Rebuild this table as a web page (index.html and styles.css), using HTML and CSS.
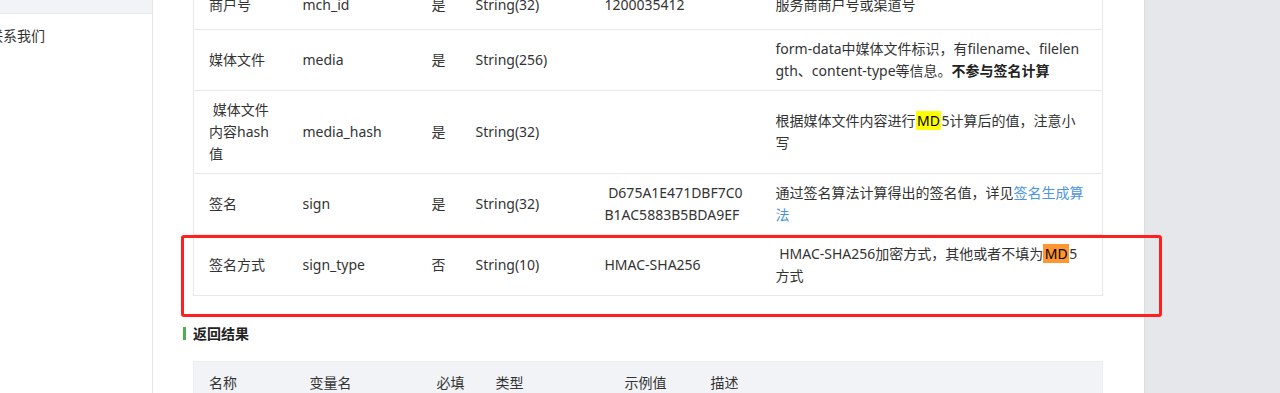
FILE: index.html
```html
<!DOCTYPE html>
<html lang="zh-CN">
<head>
<meta charset="utf-8">
<title>上传媒体文件 - 接口文档</title>
<link rel="stylesheet" href="styles.css">
</head>
<body>
<div class="app">
  <aside class="sidebar">
    <div class="sidebar-head"></div>
    <ul class="menu">
      <li class="menu-item">联系我们</li>
    </ul>
  </aside>

  <main class="main">
    <div class="doc">
      <table class="params">
        <colgroup>
          <col class="c-name"><col class="c-var"><col class="c-req"><col class="c-type"><col class="c-example"><col>
        </colgroup>
        <tbody>
          <tr class="row-lead">
            <td>商户号</td><td>mch_id</td><td>是</td><td>String(32)</td><td>1200035412</td><td>服务商商户号或渠道号</td>
          </tr>
          <tr>
            <td>媒体文件</td><td>media</td><td>是</td><td>String(256)</td><td></td>
            <td>form-data中媒体文件标识，有filename、filelength、content-type等信息。<strong>不参与签名计算</strong></td>
          </tr>
          <tr>
            <td>&nbsp;媒体文件内容hash值</td><td>media_hash</td><td>是</td><td>String(32)</td><td></td>
            <td>根据媒体文件内容进行<mark class="hl">MD</mark>5计算后的值，注意小写</td>
          </tr>
          <tr>
            <td>签名</td><td>sign</td><td>是</td><td>String(32)</td><td>&nbsp;D675A1E471DBF7C0B1AC5883B5BDA9EF</td>
            <td>通过签名算法计算得出的签名值，详见<a class="link" href="#sign">签名生成算法</a></td>
          </tr>
          <tr>
            <td>签名方式</td><td>sign_type</td><td>否</td><td>String(10)</td><td>HMAC-SHA256</td>
            <td>&nbsp;HMAC-SHA256加密方式，其他或者不填为<mark class="hl hl-active">MD</mark>5方式</td>
          </tr>
        </tbody>
      </table>

      <h3 class="section-title">返回结果</h3>

      <table class="results">
        <colgroup>
          <col class="r-name"><col class="r-var"><col class="r-req"><col class="r-type"><col class="r-example"><col>
        </colgroup>
        <thead>
          <tr><th>名称</th><th>变量名</th><th>必填</th><th>类型</th><th>示例值</th><th>描述</th></tr>
        </thead>
        <tbody>
          <tr><td>返回状态码</td><td>return_code</td><td>是</td><td>String(16)</td><td>SUCCESS</td><td>SUCCESS/FAIL</td></tr>
        </tbody>
      </table>
    </div>
  </main>

  <div class="gutter"></div>

  <div class="callout"></div>
</div>
</body>
</html>
```

FILE: styles.css
```css
* {
  box-sizing: border-box;
}

html, body {
  margin: 0;
  padding: 0;
}

body {
  font-family: "Noto Sans", "Noto Sans CJK SC", sans-serif;
  font-size: 14px;
  line-height: 22px;
  color: #333;
  background: #fff;
}

.app {
  position: relative;
  display: flex;
  height: 100vh;
  overflow: hidden;
}

/* left navigation */
.sidebar {
  width: 153px;
  flex: none;
  border-right: 1px solid #e6e6e9;
  background: #fff;
  overflow: hidden;
}

.sidebar-head {
  height: 14px;
  background: #f2f3f7;
  border-bottom: 1px solid #e8e9ec;
}

.menu {
  list-style: none;
  margin: 0;
  padding: 11px 0 0;
}

.menu-item {
  margin-left: -11px;
  white-space: nowrap;
  color: #333;
}

/* document body */
.main {
  flex: none;
  width: 991px;
  background: #fff;
  overflow: hidden;
}

.doc {
  margin-top: -15px;
  padding-left: 40px;
}

table {
  border-collapse: collapse;
  table-layout: fixed;
  width: 910px;
}

.params {
  border: 1px solid #e8e8e8;
}

.params td {
  padding: 8px 15px;
  border-bottom: 1px solid #e8e8e8;
  vertical-align: middle;
  text-align: left;
  word-break: break-all;
}

.params td:last-child {
  padding-right: 18.5px;
}

.params .row-lead td {
  padding-bottom: 13px;
}

.c-name { width: 94px; }
.c-var { width: 129px; }
.c-req { width: 44px; }
.c-type { width: 129px; }
.c-example { width: 171px; }

.params strong {
  font-weight: 700;
  color: #222;
}

.hl {
  padding: 0 1.5px;
  background: #ffff00;
  color: #000;
}

.hl-active {
  background: #ff9632;
}

.link {
  color: #4d94e3;
  text-decoration: none;
}

.section-title {
  position: relative;
  margin: 27px 0 16px;
  font-size: 14px;
  font-weight: 700;
  line-height: 22px;
  color: #222;
}

.section-title::before {
  content: "";
  position: absolute;
  left: -10px;
  top: 4px;
  width: 3px;
  height: 13px;
  background: #4caf50;
}

.results {
  border: 1px solid #ebedf0;
}

.results th {
  padding: 10px 15px;
  background: #f2f3f7;
  font-weight: 400;
  text-align: left;
  color: #333;
  border-bottom: 1px solid #e8e8e8;
}

.results td {
  padding: 8px 15px;
  border-bottom: 1px solid #e8e8e8;
}

.r-name { width: 101px; }
.r-var { width: 127px; }
.r-req { width: 59px; }
.r-type { width: 129px; }
.r-example { width: 86px; }

/* right page margin */
.gutter {
  flex: 1;
  background: #e6e7eb;
  border-left: 1px solid #dcdde1;
}

/* red annotation frame drawn over the sign_type row */
.callout {
  position: absolute;
  left: 181px;
  top: 235px;
  width: 981px;
  height: 82px;
  border: 3px solid #ff1f1f;
  border-radius: 3px;
  pointer-events: none;
}
```
